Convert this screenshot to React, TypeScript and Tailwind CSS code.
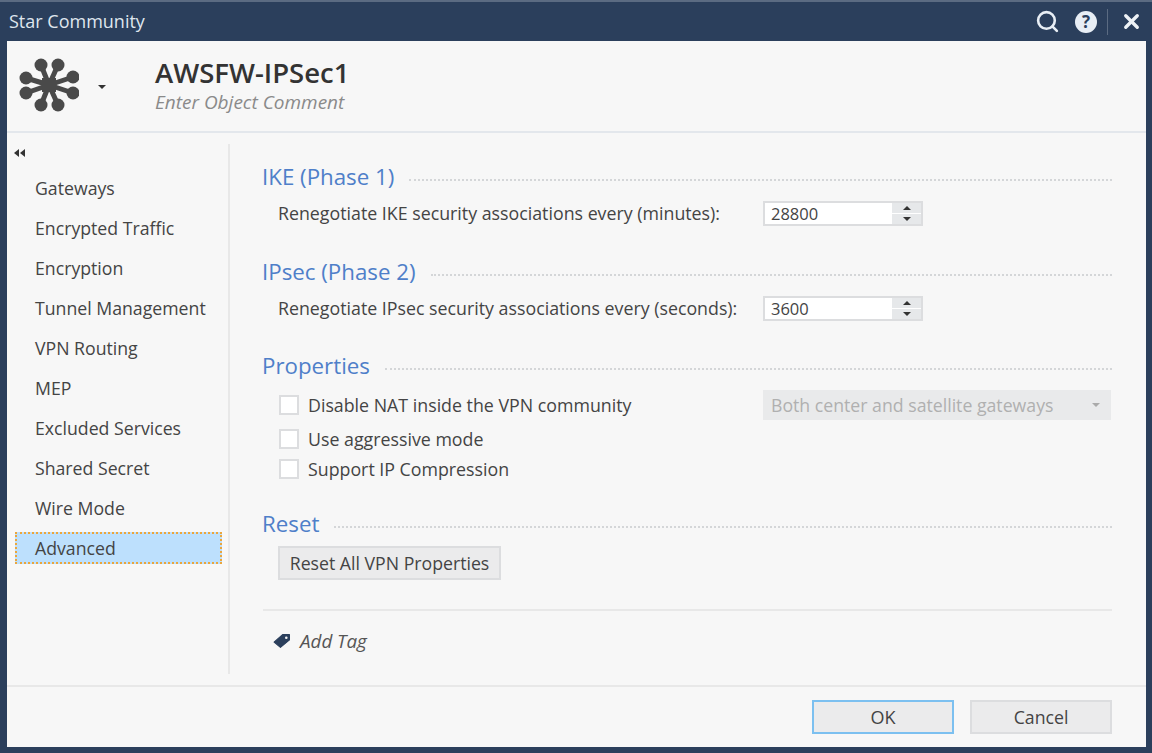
import { Search, X } from 'lucide-react';

const NAV_ITEMS = [
  'Gateways',
  'Encrypted Traffic',
  'Encryption',
  'Tunnel Management',
  'VPN Routing',
  'MEP',
  'Excluded Services',
  'Shared Secret',
  'Wire Mode',
  'Advanced',
];

function StarIcon() {
  const nodes = [
    [22, 7],
    [39, 7],
    [7, 20],
    [54, 19],
    [7, 35],
    [54, 35],
    [22, 47],
    [39, 47],
  ];
  return (
    <svg width="60" height="56" viewBox="0 0 60 56" className="h-[56px] w-[60px] shrink-0">
      {nodes.map(([x, y]) => (
        <g key={`${x}-${y}`}>
          <line x1="30" y1="27" x2={x} y2={y} stroke="#4a4a4a" strokeWidth="5" />
          <circle cx={x} cy={y} r="6.5" fill="#4a4a4a" />
        </g>
      ))}
      <rect x="23" y="20" width="14" height="14" fill="#4a4a4a" />
    </svg>
  );
}

function HelpIcon() {
  return (
    <div className="flex h-[22px] w-[22px] items-center justify-center rounded-full bg-[#e8eef5] text-[17px] leading-none font-bold text-[#2b3f5c]">
      ?
    </div>
  );
}

function SectionTitle({ title, className }: { title: string; className?: string }) {
  return (
    <div className={`flex items-center ${className ?? ''}`}>
      <span className="-ml-px pt-[2px] text-[22.3px] leading-[24px] text-[#4f7fc9]">{title}</span>
      <div className="mt-[7px] ml-[15px] flex-1 border-t-2 border-dotted border-[#d4d6d8]" />
    </div>
  );
}

function SpinRow({ label, value }: { label: string; value: string }) {
  return (
    <div className="flex h-[26px] items-center pl-[15px]">
      <span className="w-[485px] text-[17.8px] whitespace-nowrap text-[#444]">{label}</span>
      <div className="flex h-[25px] w-[160px] border-2 border-[#dcdddf] bg-white">
        <span className="flex-1 pl-[6px] text-[16.5px] leading-[21px] text-[#444]">{value}</span>
        <div className="flex w-[29px] flex-col gap-px bg-white">
          <div className="flex flex-1 items-center justify-center bg-[#e6e8ea]">
            <div className="h-0 w-0 border-x-[4px] border-b-[4px] border-x-transparent border-b-[#333]" />
          </div>
          <div className="flex flex-1 items-center justify-center bg-[#e6e8ea]">
            <div className="h-0 w-0 border-x-[4px] border-t-[4px] border-x-transparent border-t-[#333]" />
          </div>
        </div>
      </div>
    </div>
  );
}

function CheckRow({ label, className }: { label: string; className?: string }) {
  return (
    <div className={`flex items-center gap-[9px] pl-[16px] ${className ?? ''}`}>
      <div className="h-[20px] w-[20px] border-2 border-[#dcdddf] bg-white" />
      <span className="text-[17.8px] leading-[20px] whitespace-nowrap text-[#444]">{label}</span>
    </div>
  );
}

export default function App() {
  return (
    <div className="flex h-[753px] w-[1152px] flex-col overflow-hidden bg-[#2b3f5c] font-['Open_Sans',sans-serif]">
      {/* title bar */}
      <div className="flex h-[41px] shrink-0 items-center justify-between border-t-2 border-[#5b6b82] pr-[9px] pl-[9px]">
        <span className="text-[18px] text-[#dfe6ee]">Star Community</span>
        <div className="flex items-center">
          <Search size={25} strokeWidth={2.5} className="mr-[15px] text-[#e8eef5]" />
          <HelpIcon />
          <div className="mr-[12px] ml-[10px] h-[26px] w-px bg-[#5b6b82]" />
          <X size={23} strokeWidth={3.5} className="text-[#eef2f6]" />
        </div>
      </div>

      {/* dialog body */}
      <div className="mr-[6px] mb-[6px] ml-[7px] flex flex-1 flex-col bg-[#f7f7f7]">
        <div className="flex h-[92px] shrink-0 items-center border-b-2 border-[#e3e7ec] pl-[12px]">
          <StarIcon />
          <div className="mt-[2px] ml-[19px] h-0 w-0 border-x-[4px] border-t-[4px] border-x-transparent border-t-[#333]" />
          <div className="mb-[6px] ml-[49px] flex flex-col">
            <span className="text-[27.5px] leading-[38px] font-semibold text-[#333]">AWSFW-IPSec1</span>
            <span className="text-[19px] leading-[20px] text-[#8a8a8a] italic">Enter Object Comment</span>
          </div>
        </div>

        <div className="flex flex-1">
          {/* side nav */}
          <div className="mt-[11px] mb-[11px] flex w-[223px] shrink-0 flex-col border-r-2 border-[#e8e8e8]">
            <svg width="12" height="18" viewBox="0 0 12 18" className="ml-[7px] shrink-0">
              <path d="M0 9 L5 5 L5 13 Z M6 9 L11 5 L11 13 Z" fill="#333" />
            </svg>
            <div className="mt-[10px] flex flex-col">
              {NAV_ITEMS.map((item) => (
                <div
                  key={item}
                  className={
                    item === 'Advanced'
                      ? 'mr-[6px] ml-[8px] flex h-[32px] items-center border-2 border-dotted border-[#eba63c] bg-[#bde0fd] pl-[18px] text-[17.7px] text-[#444]'
                      : 'mr-[6px] mb-[8px] ml-[8px] flex h-[32px] items-center pl-[20px] text-[17.7px] text-[#444]'
                  }
                >
                  {item}
                </div>
              ))}
            </div>
          </div>

          {/* content */}
          <div className="flex flex-1 flex-col pt-[30px] pr-[34px] pl-[33px]">
            <SectionTitle title="IKE (Phase 1)" />
            <div className="mt-[11px]">
              <SpinRow label="Renegotiate IKE security associations every (minutes):" value="28800" />
            </div>
            <SectionTitle title="IPsec (Phase 2)" className="mt-[32px]" />
            <div className="mt-[11px]">
              <SpinRow label="Renegotiate IPsec security associations every (seconds):" value="3600" />
            </div>
            <SectionTitle title="Properties" className="mt-[31px]" />
            <div className="mt-[12px] flex items-center justify-between">
              <CheckRow label="Disable NAT inside the VPN community" />
              <div className="mr-px flex h-[30px] w-[348px] items-center justify-between bg-[#e9eaeb] pr-[11px] pl-[8px]">
                <span className="text-[17.7px] whitespace-nowrap text-[#b0b0b0]">Both center and satellite gateways</span>
                <div className="h-0 w-0 border-x-[4px] border-t-[4px] border-x-transparent border-t-[#aaa]" />
              </div>
            </div>
            <CheckRow label="Use aggressive mode" className="mt-[9px]" />
            <CheckRow label="Support IP Compression" className="mt-[10px]" />
            <SectionTitle title="Reset" className="mt-[31px]" />
            <button className="mt-[10px] ml-[15px] h-[34px] w-[223px] border-2 border-[#dcdddf] bg-[#ebebec] text-[17.7px] whitespace-nowrap text-[#444]">
              Reset All VPN Properties
            </button>
            <div className="mt-[29px] border-t-2 border-[#e8e8e8]" />
            <div className="mt-[16px] flex items-center gap-[10px] pl-[10px]">
              <svg width="17" height="16" viewBox="0 0 16 14" className="shrink-0">
                <path d="M1 8 L9 1 L15.5 1 L15.5 6 L7 13 Z" fill="#2b3f5c" stroke="#2b3f5c" strokeLinejoin="round" />
                <circle cx="12.5" cy="4" r="1.2" fill="#f7f7f7" />
              </svg>
              <span className="text-[18.8px] text-[#555] italic">Add Tag</span>
            </div>
          </div>
        </div>

        {/* footer */}
        <div className="flex h-[62px] shrink-0 items-start justify-end gap-[16px] border-t-2 border-[#e8e8e8] pt-[13px] pr-[34px]">
          <button className="h-[34px] w-[142px] border-2 border-[#7cc0f0] bg-[#ebebec] text-[18px] text-[#444]">OK</button>
          <button className="h-[34px] w-[142px] border-2 border-[#dcdddf] bg-[#ebebec] text-[17.7px] text-[#444]">Cancel</button>
        </div>
      </div>
    </div>
  );
}
